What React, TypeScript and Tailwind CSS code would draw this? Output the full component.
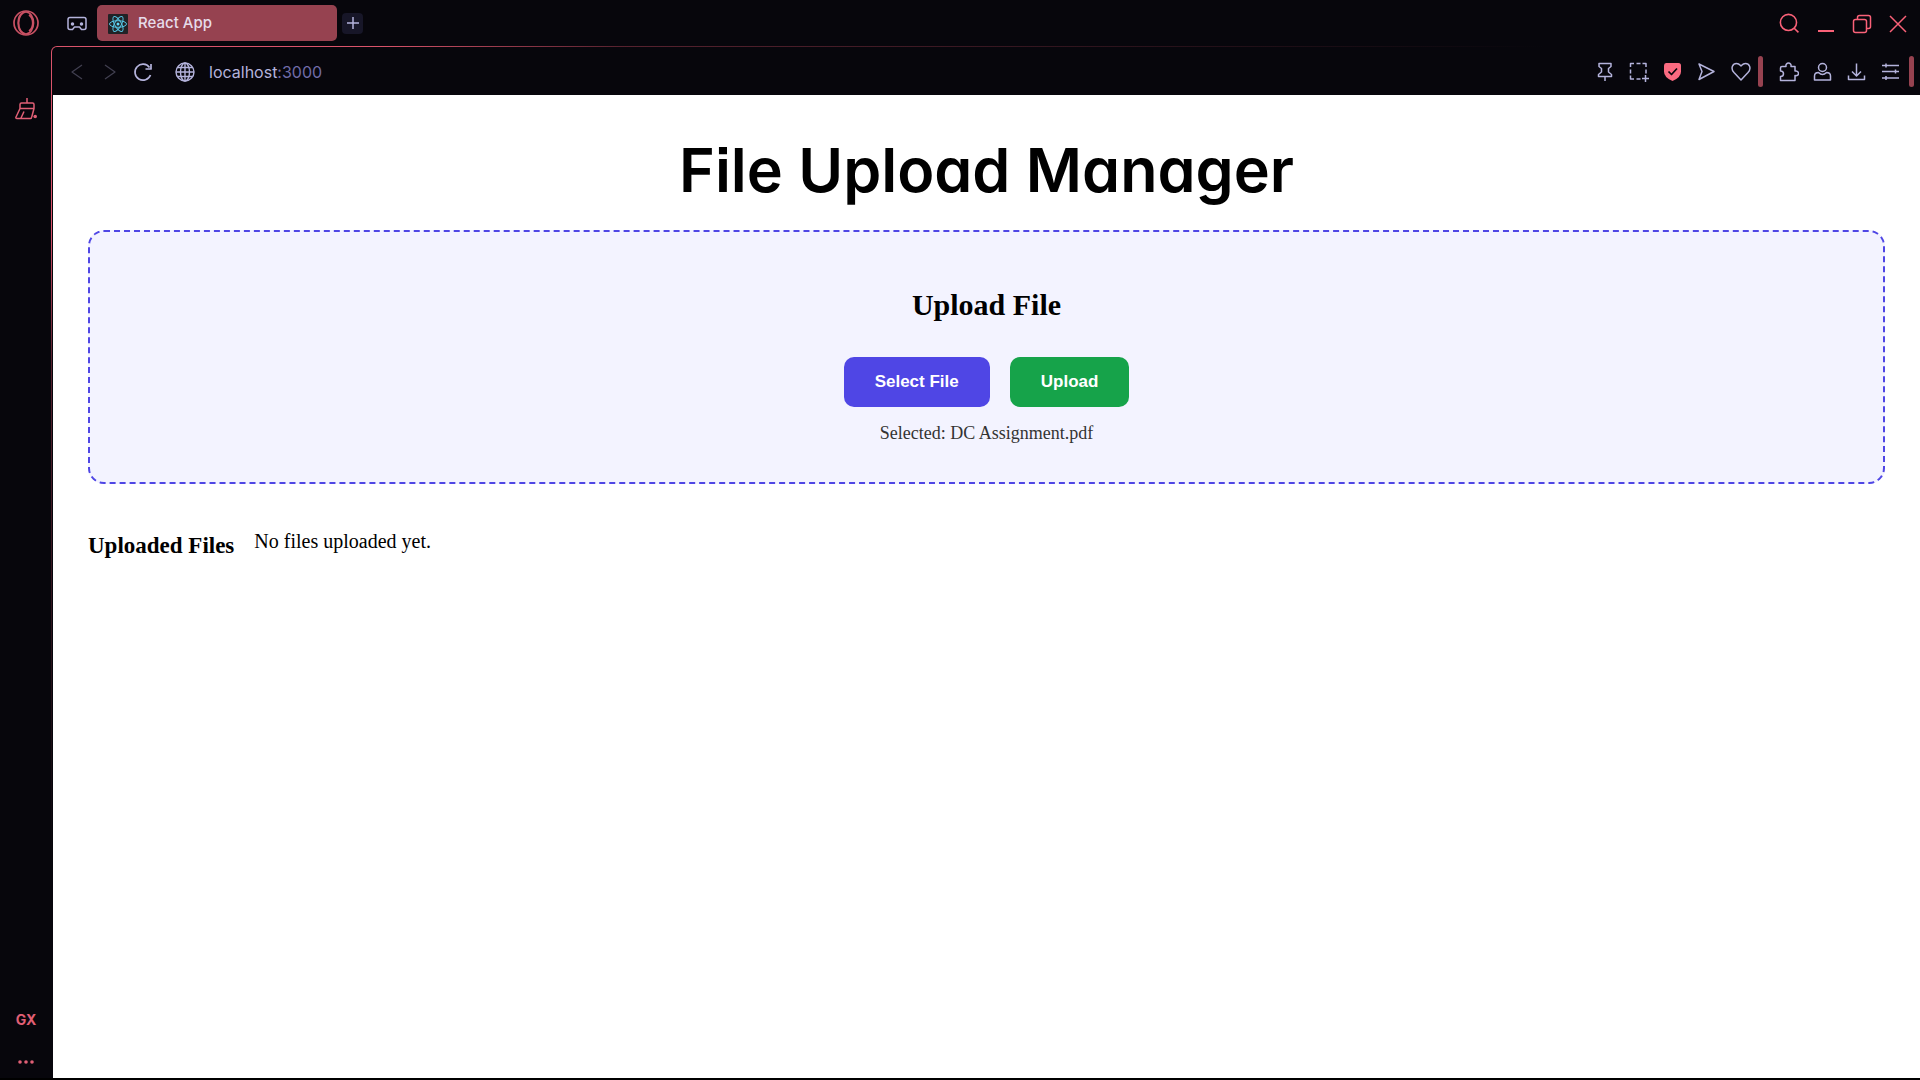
import React from "react";

type IconProps = { className?: string; children: React.ReactNode; box?: string; w?: number };

function Icon({ className = "size-5", children, box = "0 0 20 20", w = 1.5 }: IconProps) {
  return (
    <svg viewBox={box} className={className} fill="none" stroke="currentColor" strokeWidth={w} strokeLinejoin="round" aria-hidden="true">
      {children}
    </svg>
  );
}

function IconButton({ label, children, className = "" }: { label: string; children: React.ReactNode; className?: string }) {
  return (
    <button type="button" aria-label={label} className={"flex shrink-0 items-center justify-center " + className}>
      {children}
    </button>
  );
}

function TabStrip() {
  return (
    <header className="flex h-[46px] items-center text-[#fa6178]">
      <IconButton label="Opera menu" className="w-[52px] text-[#c95164]">
        <Icon className="size-[26px]" box="0 0 26 26" w={1.7}>
          <circle cx="13" cy="13" r="12" />
          <ellipse cx="13" cy="13" rx="7.5" ry="11" />
          <path d="M16 5c5 3.500 5 12.500 0 16M10.500 2.500C3.500 5 3.500 21 10.500 23.500" />
        </Icon>
      </IconButton>
      <IconButton label="Workspace" className="ml-[15px] mt-1 text-[#b4b3dc]">
        <Icon>
          <path d="M3 2.500h14Q19 2.500 19 4.500V12.500Q19 14.500 17 14.500H14.500L12.500 12H7.500L5.500 14.500H3Q1 14.500 1 12.500V4.500Q1 2.500 3 2.500Z" />
          <circle cx="5.500" cy="9" r="1" fill="currentColor" />
          <circle cx="14.500" cy="9" r="1" fill="currentColor" />
        </Icon>
      </IconButton>
      <button type="button" className="ml-[10px] flex h-9 w-60 items-center gap-[10px] rounded-[5px] bg-[#964250] pl-[11px] pt-px font-['Inter',sans-serif] text-[15px] font-medium text-[#e6dcea]">
        <svg viewBox="0 0 20 20" className="size-5" fill="none" stroke="#55c4e3" strokeWidth="1" aria-hidden="true">
          <rect width="20" height="20" rx="1" fill="#222226" stroke="none" />
          <ellipse cx="10" cy="10" rx="8.500" ry="3.300" />
          <ellipse cx="10" cy="10" rx="8.500" ry="3.300" transform="rotate(60 10 10)" />
          <ellipse cx="10" cy="10" rx="8.500" ry="3.300" transform="rotate(120 10 10)" />
          <circle cx="10" cy="10" r="1.500" fill="#61dafb" stroke="none" />
        </svg>
        React App
      </button>
      <IconButton label="New tab" className="ml-[5px] size-[21px] rounded bg-[#171628] text-[#b4b3dc]">
        <Icon className="size-3" box="0 0 12 12" w={1.5}>
          <path d="M6 0v12M0 6h12" />
        </Icon>
      </IconButton>
      <div className="flex-1" />
      <div className="mr-3 flex items-center gap-4 pt-px">
        <IconButton label="Search tabs">
          <Icon className="size-[21px]" box="0 0 20 20">
            <circle cx="9" cy="9" r="7.700" />
            <path d="m14.500 14.500 4 4" />
          </Icon>
        </IconButton>
        <IconButton label="Minimize">
          <Icon className="size-5" w={2}>
            <path d="M2 17h16" />
          </Icon>
        </IconButton>
        <IconButton label="Restore">
          <Icon>
            <rect x="1.500" y="5.500" width="13" height="13" rx="2" />
            <path d="M5.500 5.500V3.500Q5.500 1.500 7.500 1.500H16.500Q18.500 1.500 18.500 3.500V12.500Q18.500 14.500 16.500 14.500H14.500" />
          </Icon>
        </IconButton>
        <IconButton label="Close">
          <Icon>
            <path d="m2 2 16 16M18 2 2 18" />
          </Icon>
        </IconButton>
      </div>
    </header>
  );
}

function AddressBar() {
  return (
    <div className="flex h-[48px] items-center pl-[14px] pt-px text-[#b4b3dc]">
      <IconButton label="Back" className="text-[#413f50]">
        <Icon w={1.3}>
          <path d="M15 3 5 10l10 7" />
        </Icon>
      </IconButton>
      <IconButton label="Forward" className="ml-[13px] text-[#413f50]">
        <Icon w={1.3}>
          <path d="m5 3 10 7-10 7" />
        </Icon>
      </IconButton>
      <IconButton label="Reload" className="ml-[13px]">
        <Icon w={1.7}>
          <path d="M16.500 5.500A8 8 0 1 0 17.500 13M18 2V7h-5.500" />
        </Icon>
      </IconButton>
      <IconButton label="Site information" className="ml-[22px]">
        <Icon w={1.4}>
          <circle cx="10" cy="10" r="9" />
          <ellipse cx="10" cy="10" rx="4.500" ry="9" />
          <path d="M10 1v18M1 10h18M2.500 5.500h15M2.500 14.500h15" />
        </Icon>
      </IconButton>
      <p className="ml-[14px] flex-1 font-['Inter',sans-serif] text-base">
        localhost<span className="text-[#706ca8]">:3000</span>
      </p>
      <div className="flex items-center gap-[14px]">
        <IconButton label="Pin">
          <Icon>
            <path d="M4 1.500h12v3l-2.500 2v3.500L16.500 12.500v2h-13v-2L6.500 10V6.500L4 4.500ZM10 14.500V19" />
          </Icon>
        </IconButton>
        <IconButton label="Snapshot">
          <Icon>
            <path d="M1.500 5V1.500H5M7.500 1.500h4M13.500 1.500H17V5M17 7.500v4M1.500 7.500v4M1.500 13.500V17H5M7.500 17h4M16.500 13v7M13 16.500h7" />
          </Icon>
        </IconButton>
        <IconButton label="Ad blocker" className="text-[#fa6a80]">
          <Icon>
            <path d="M3 1h12.500Q18 1 18 3.500V9.500Q18 15.500 9.500 19Q1 15.500 1 9.500V3.500Q1 1 3 1Z" fill="currentColor" stroke="none" />
            <path d="m5.500 9.500 3 3L14 6.500" stroke="#07060c" strokeWidth="1.700" />
          </Icon>
        </IconButton>
        <IconButton label="Send">
          <Icon>
            <path d="M2 2 17 9.500 2 17.500 5 9.500Z" />
          </Icon>
        </IconButton>
        <IconButton label="Bookmark">
          <Icon>
            <path d="M10 18 3 10.500C-1 6 2 1.500 5.500 1.500 8 1.500 9 3 10 4 11 3 12 1.500 14.500 1.500 18 1.500 21 6 17 10.500Z" />
          </Icon>
        </IconButton>
      </div>
      <span className="ml-[7px] h-[31px] w-[5px] rounded-sm bg-[#964250]" />
      <div className="ml-4 flex items-center gap-[14px]">
        <IconButton label="Extensions">
          <Icon>
            <path d="M3 4.500H7C6.500 2.500 8 1 9.500 1S12.500 2.500 12 4.500H16V9C18 8.500 19.500 10 19.500 11.500S18 14 16 13.500V18.500H1.500V14.500C5.500 14.500 5.500 9 1.500 9V6Q1.500 4.500 3 4.500Z" />
          </Icon>
        </IconButton>
        <IconButton label="Profile">
          <Icon>
            <circle cx="9.500" cy="5.500" r="4" />
            <path d="M5.500 10.500Q1.500 10.500 1.500 14V18H17.500V14Q17.500 10.500 13.500 10.500Q9.500 14.500 5.500 10.500Z" />
          </Icon>
        </IconButton>
        <IconButton label="Downloads">
          <Icon>
            <path d="M9.500 1.500v12M5 9.500l4.500 4.500L14 9.500M1.500 13.500v4h16v-4" />
          </Icon>
        </IconButton>
        <IconButton label="Easy setup">
          <Icon>
            <path d="M1 3.500h17M1 9.500h17M1 16h17M5 1.500v4M14.500 7.500v4M5 14v4" />
          </Icon>
        </IconButton>
      </div>
      <span className="ml-2 mr-[6px] h-[31px] w-[5px] rounded-sm bg-[#964250]" />
    </div>
  );
}

function Sidebar() {
  return (
    <aside className="flex w-[51px] flex-col items-center pb-[6px] pt-[52px] text-[#e05f75]">
      <IconButton label="Cleaner">
        <Icon className="size-[22px]" box="0 0 22 22">
          <path d="M12 0v5M5 10.500V6.500Q5 5 6.500 5h11Q19 5 19 6.500v4ZM5 10.500.800 19.500q0 1 1 1H15.500Q16.500 20.500 17 18L19 10.500M6 20l3-6.500" />
          <circle cx="20.200" cy="18.500" r="1.800" fill="currentColor" stroke="none" />
        </Icon>
      </IconButton>
      <div className="flex-1" />
      <button type="button" className="ml-px font-['Inter',sans-serif] text-[14px] font-bold leading-4">GX</button>
      <IconButton label="More" className="ml-px mt-6">
        <Icon className="h-5 w-[18px]" box="0 0 18 20">
          <g fill="currentColor" stroke="none">
            <circle cx="3" cy="10" r="1.800" />
            <circle cx="9" cy="10" r="1.800" />
            <circle cx="15" cy="10" r="1.800" />
          </g>
        </Icon>
      </IconButton>
    </aside>
  );
}

function UploadPage() {
  return (
    <main className="flex-1 bg-white px-[35px] pt-[35px] font-['Liberation_Serif',serif] text-black">
      <h1 className="text-center font-['Inter',sans-serif] text-[61px] font-semibold leading-[80px] [font-feature-settings:'cv11','ss07']">
        File Upload Manager
      </h1>
      <section className="mt-5 flex flex-col items-center rounded-2xl border-2 border-dashed border-[#4f46e5] bg-[#f3f3ff] pb-[39px] pt-[56px]">
        <h2 className="text-[30px] font-bold leading-[34px]">Upload File</h2>
        <div className="mt-[35px] flex gap-5 font-['Liberation_Sans',sans-serif] text-[17px] font-bold text-white">
          <button type="button" className="h-[50px] rounded-[10px] bg-[#4f46e5] px-[31px]">Select File</button>
          <button type="button" className="h-[50px] rounded-[10px] bg-[#16a34a] px-[31px]">Upload</button>
        </div>
        <p className="mt-4 text-lg leading-5 text-[#333]">Selected: DC Assignment.pdf</p>
      </section>
      <section className="mt-[45px] flex gap-5">
        <h3 className="mt-1 text-[23px] font-bold leading-[26px]">Uploaded Files</h3>
        <p className="text-[20px] leading-6">No files uploaded yet.</p>
      </section>
    </main>
  );
}

export default function App() {
  return (
    <div className="flex min-h-screen flex-col bg-[#07060c]">
      <TabStrip />
      <div className="flex flex-1">
        <Sidebar />
        <div className="flex min-w-0 flex-1 rounded-tl-md bg-[radial-gradient(ellipse_80%_80%_at_top_left,#d9536a_22%,#57222f_38%,#07060c_100%)] pl-px pt-px">
          <div className="flex min-w-0 flex-1 flex-col rounded-tl-[5px] bg-[#07060c] pl-px">
            <AddressBar />
            <UploadPage />
          </div>
        </div>
      </div>
      <div className="h-[2px] bg-black" />
    </div>
  );
}
